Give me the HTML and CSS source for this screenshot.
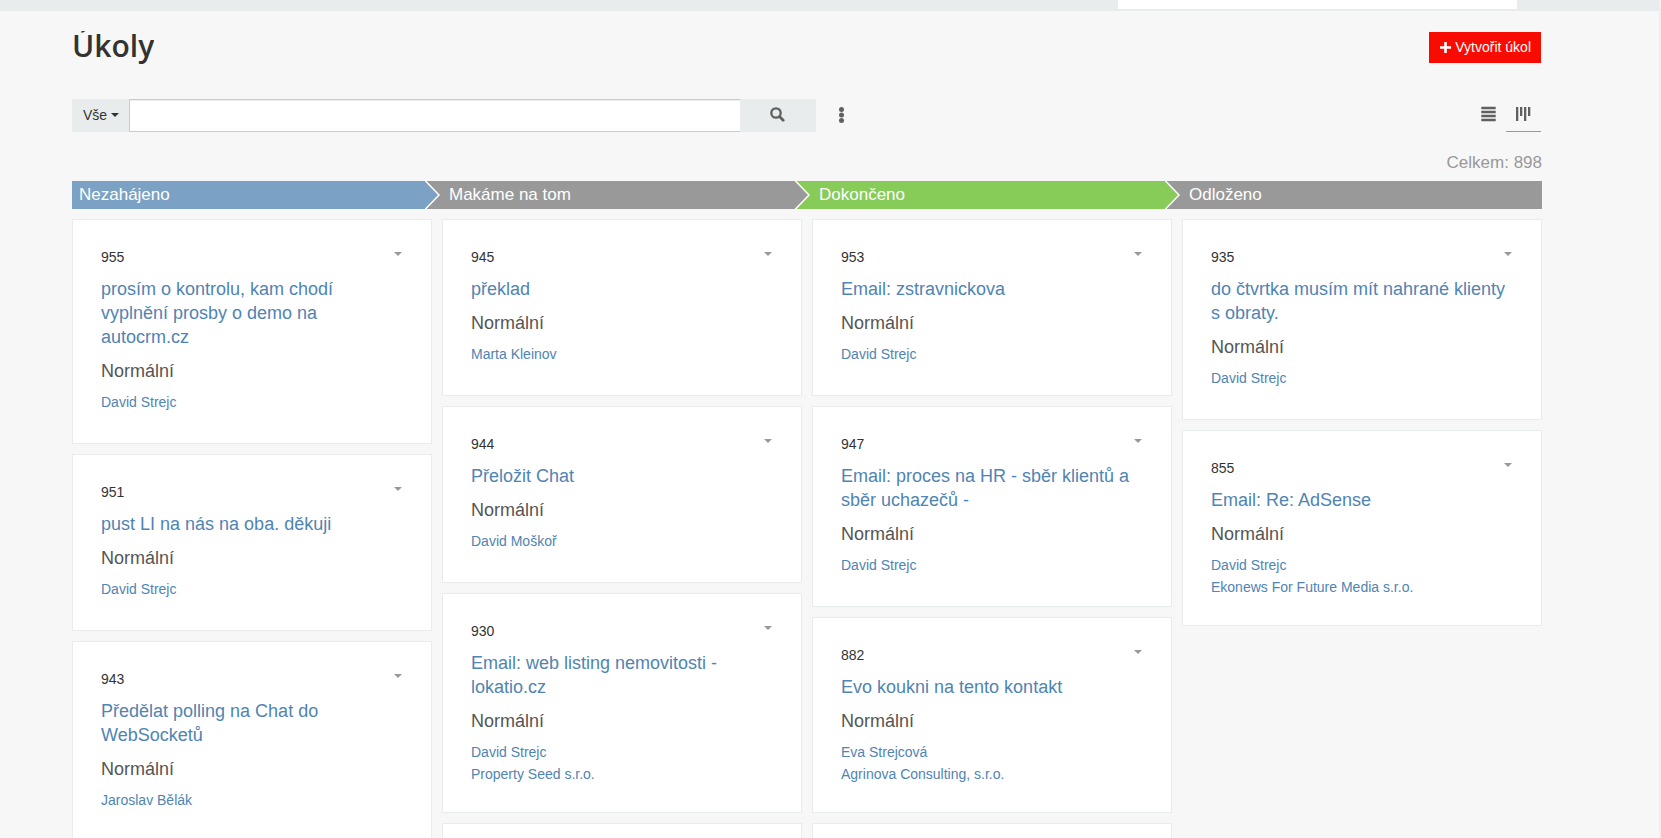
FILE: index.html
```html
<!DOCTYPE html>
<html lang="cs">
<head>
<meta charset="utf-8">
<title>Úkoly</title>
<link rel="stylesheet" href="styles.css">
</head>
<body>
<div class="topbar"><div class="topbar-search"></div></div>
<main class="page">
  <header class="page-head">
    <h1 class="page-title">Úkoly</h1>
    <button class="btn-create" type="button">
      <svg width="11" height="11" viewBox="0 0 11 11" aria-hidden="true"><path d="M4.200 0h2.600v4.200H11v2.600H6.800V11H4.200V6.800H0V4.200h4.200z" fill="currentColor"/></svg>
      Vytvořit úkol
    </button>
  </header>
  <div class="toolbar">
    <form class="search">
      <button class="filter" type="button">Vše <span class="caret"></span></button>
      <input class="search-input" type="text" aria-label="Hledat">
      <button class="search-btn" type="button" aria-label="Hledat">
        <svg width="15" height="15" viewBox="0 0 15 15" aria-hidden="true"><circle cx="6" cy="6" r="4.700" fill="none" stroke="currentColor" stroke-width="2.300"/><path d="M9.500 9.500l3.700 3.700" stroke="currentColor" stroke-width="2.800" stroke-linecap="round"/></svg>
      </button>
    </form>
    <button class="more" type="button" aria-label="Další">
      <svg width="5" height="16" viewBox="0 0 5 16" aria-hidden="true"><g fill="currentColor"><circle cx="2.500" cy="2.500" r="2.500"/><circle cx="2.500" cy="8" r="2.500"/><circle cx="2.500" cy="13.500" r="2.500"/></g></svg>
    </button>
    <nav class="views">
      <button class="view" type="button" aria-label="Seznam">
        <svg width="15" height="15" viewBox="0 0 15 15" aria-hidden="true"><path d="M.3-.2h14.400v2.400H.3zM.3 3.800h14.400v2.400H.3zM.3 7.800h14.400v2.400H.3zM.3 11.800h14.400v2.400H.3z" fill="currentColor"/></svg>
      </button>
      <button class="view view-active" type="button" aria-label="Kanban">
        <svg width="15" height="15" viewBox="0 0 15 15" aria-hidden="true"><path d="M0 0h2.300v14H0zM4 0h2.300v9H4zM8 0h2.300v14H8zM12 0h2.300v9H12z" fill="currentColor"/></svg>
      </button>
    </nav>
  </div>
  <div class="total">Celkem: 898</div>
  <div class="board stages">
    <div class="stage blue">Nezahájeno
      <svg class="arrow" width="17" height="28" viewBox="0 0 17 28" aria-hidden="true"><rect class="fill-gray" width="17" height="28"/><path class="fill-blue" d="M0 0l14.500 14L0 28z"/><path class="edge" d="M0-.5L14 14 0 28.500"/></svg>
    </div>
    <div class="stage gray">Makáme na tom
      <svg class="arrow" width="17" height="28" viewBox="0 0 17 28" aria-hidden="true"><rect class="fill-green" width="17" height="28"/><path class="fill-gray" d="M0 0l14.500 14L0 28z"/><path class="edge" d="M0-.5L14 14 0 28.500"/></svg>
    </div>
    <div class="stage green">Dokončeno
      <svg class="arrow" width="17" height="28" viewBox="0 0 17 28" aria-hidden="true"><rect class="fill-gray" width="17" height="28"/><path class="fill-green" d="M0 0l14.500 14L0 28z"/><path class="edge" d="M0-.5L14 14 0 28.500"/></svg>
    </div>
    <div class="stage gray">Odloženo</div>
  </div>
  <div class="board">
    <section class="column">
      <article class="card">
        <div class="card-head">955<button class="card-menu" type="button" aria-label="Menu"><span class="caret"></span></button></div>
        <a class="card-title" href="#">prosím o kontrolu, kam chodí vyplnění prosby o demo na autocrm.cz</a>
        <div class="priority">Normální</div>
        <div class="people"><a href="#">David Strejc</a></div>
      </article>
      <article class="card">
        <div class="card-head">951<button class="card-menu" type="button" aria-label="Menu"><span class="caret"></span></button></div>
        <a class="card-title" href="#">pust LI na nás na oba. děkuji</a>
        <div class="priority">Normální</div>
        <div class="people"><a href="#">David Strejc</a></div>
      </article>
      <article class="card">
        <div class="card-head">943<button class="card-menu" type="button" aria-label="Menu"><span class="caret"></span></button></div>
        <a class="card-title" href="#">Předělat polling na Chat do WebSocketů</a>
        <div class="priority">Normální</div>
        <div class="people"><a href="#">Jaroslav Bělák</a></div>
      </article>
    </section>
    <section class="column">
      <article class="card">
        <div class="card-head">945<button class="card-menu" type="button" aria-label="Menu"><span class="caret"></span></button></div>
        <a class="card-title" href="#">překlad</a>
        <div class="priority">Normální</div>
        <div class="people"><a href="#">Marta Kleinov</a></div>
      </article>
      <article class="card">
        <div class="card-head">944<button class="card-menu" type="button" aria-label="Menu"><span class="caret"></span></button></div>
        <a class="card-title" href="#">Přeložit Chat</a>
        <div class="priority">Normální</div>
        <div class="people"><a href="#">David Moškoř</a></div>
      </article>
      <article class="card">
        <div class="card-head">930<button class="card-menu" type="button" aria-label="Menu"><span class="caret"></span></button></div>
        <a class="card-title" href="#">Email: web listing nemovitosti - lokatio.cz</a>
        <div class="priority">Normální</div>
        <div class="people"><a href="#">David Strejc</a><a href="#">Property Seed s.r.o.</a></div>
      </article>
      <article class="card"></article>
    </section>
    <section class="column">
      <article class="card">
        <div class="card-head">953<button class="card-menu" type="button" aria-label="Menu"><span class="caret"></span></button></div>
        <a class="card-title" href="#">Email: zstravnickova</a>
        <div class="priority">Normální</div>
        <div class="people"><a href="#">David Strejc</a></div>
      </article>
      <article class="card">
        <div class="card-head">947<button class="card-menu" type="button" aria-label="Menu"><span class="caret"></span></button></div>
        <a class="card-title" href="#">Email: proces na HR - sběr klientů a sběr uchazečů -</a>
        <div class="priority">Normální</div>
        <div class="people"><a href="#">David Strejc</a></div>
      </article>
      <article class="card">
        <div class="card-head">882<button class="card-menu" type="button" aria-label="Menu"><span class="caret"></span></button></div>
        <a class="card-title" href="#">Evo koukni na tento kontakt</a>
        <div class="priority">Normální</div>
        <div class="people"><a href="#">Eva Strejcová</a><a href="#">Agrinova Consulting, s.r.o.</a></div>
      </article>
      <article class="card"></article>
    </section>
    <section class="column">
      <article class="card">
        <div class="card-head">935<button class="card-menu" type="button" aria-label="Menu"><span class="caret"></span></button></div>
        <a class="card-title" href="#">do čtvrtka musím mít nahrané klienty s obraty.</a>
        <div class="priority">Normální</div>
        <div class="people"><a href="#">David Strejc</a></div>
      </article>
      <article class="card">
        <div class="card-head">855<button class="card-menu" type="button" aria-label="Menu"><span class="caret"></span></button></div>
        <a class="card-title" href="#">Email: Re: AdSense</a>
        <div class="priority">Normální</div>
        <div class="people"><a href="#">David Strejc</a><a href="#">Ekonews For Future Media s.r.o.</a></div>
      </article>
    </section>
  </div>
</main>
</body>
</html>
```
FILE: styles.css
```css
* { box-sizing: border-box; }

body {
  margin: 0;
  height: 100vh;
  overflow: hidden;
  background: #f7f7f7;
  border-right: 2px solid #f0f0f0;
  color: #333;
  font: 14px/22px "Liberation Sans", Arial, sans-serif;
}

a { color: #4f84b3; text-decoration: none; }

button {
  border: 0;
  padding: 0;
  background: none;
  color: inherit;
  font: inherit;
  cursor: pointer;
}

svg { display: block; }

.topbar {
  display: flex;
  justify-content: flex-end;
  height: 11px;
  padding-right: 142px;
  background: #e8eced;
}
.topbar-search { width: 24vw; height: 9px; background: #fff; }

.page { padding: 20px 117px 0 72px; }

.page-head {
  display: flex;
  justify-content: space-between;
  align-items: flex-start;
  padding-right: 1px;
}
.page-title {
  margin: 0;
  padding-bottom: 6px;
  overflow: hidden;
  font: 600 30px/30px "Open Sans", sans-serif;
}
.btn-create {
  display: flex;
  align-items: center;
  gap: 4px;
  height: 31px;
  margin-top: 1px;
  padding: 0 10px 1px 11px;
  background: #f80b00;
  color: #fff;
}

.toolbar { display: flex; align-items: flex-start; margin-top: 32px; padding-right: 1px; }
.search { display: flex; flex: 0 0 744px; height: 33px; }
.filter {
  display: flex;
  align-items: center;
  gap: 4px;
  padding: 0 10px 1px 11px;
  background: #e8eced;
}
.search-input {
  flex: 1;
  min-width: 0;
  border: 1px solid #ccc;
  border-right: 0;
  background: #fff;
  box-shadow: inset 0 1px 1px rgba(0, 0, 0, .075);
}
.search-btn {
  display: flex;
  align-items: center;
  justify-content: center;
  width: 76px;
  padding: 0 2px 2px 0;
  background: #e8eced;
  color: #606060;
}
.more { padding: 8px 23px; color: #606060; }
.views { display: flex; margin-left: auto; color: #606060; }
.view { height: 33px; padding: 8px 10px 9px; border-bottom: 1px solid transparent; }
.view svg { overflow: visible; }
.view-active { border-color: #999; }

.caret {
  display: inline-block;
  border-top: 4px solid;
  border-left: 4px solid transparent;
  border-right: 4px solid transparent;
}

.total {
  margin: 20px 0 7px;
  text-align: right;
  color: #999;
  font-size: 17px;
}

.board {
  display: grid;
  grid-template-columns: repeat(4, minmax(0, 1fr));
  gap: 10px;
  align-items: start;
}
.stages { margin-bottom: 10px; }
.stage {
  display: flex;
  justify-content: space-between;
  height: 28px;
  margin-right: -10px;
  padding-left: 7px;
  color: #fff;
  font-size: 17px;
  line-height: 28px;
}
.stage:last-child { margin-right: 0; }
.blue { background: #7ba2c4; }
.gray { background: #999; }
.green { background: #87cb58; }
.fill-blue { fill: #7ba2c4; }
.fill-gray { fill: #999; }
.fill-green { fill: #87cb58; }
.edge { fill: none; stroke: #fff; stroke-width: 1.5; }

.column { display: flex; flex-direction: column; gap: 10px; }
.card {
  min-height: 177px;
  padding: 26px 29px 27px 28px;
  border: 1px solid #e8eced;
  background: #fff;
}
.card-head { display: flex; justify-content: space-between; align-items: flex-start; }
.card-menu { display: flex; padding: 6px 0; color: #999; }
.card-title { display: block; margin-top: 9px; font-size: 18px; line-height: 24px; }
.priority { margin: 10px 0 8px; color: #555; font-size: 18px; line-height: 24px; }
.people { display: flex; flex-direction: column; align-items: flex-start; min-height: 25px; }
```
